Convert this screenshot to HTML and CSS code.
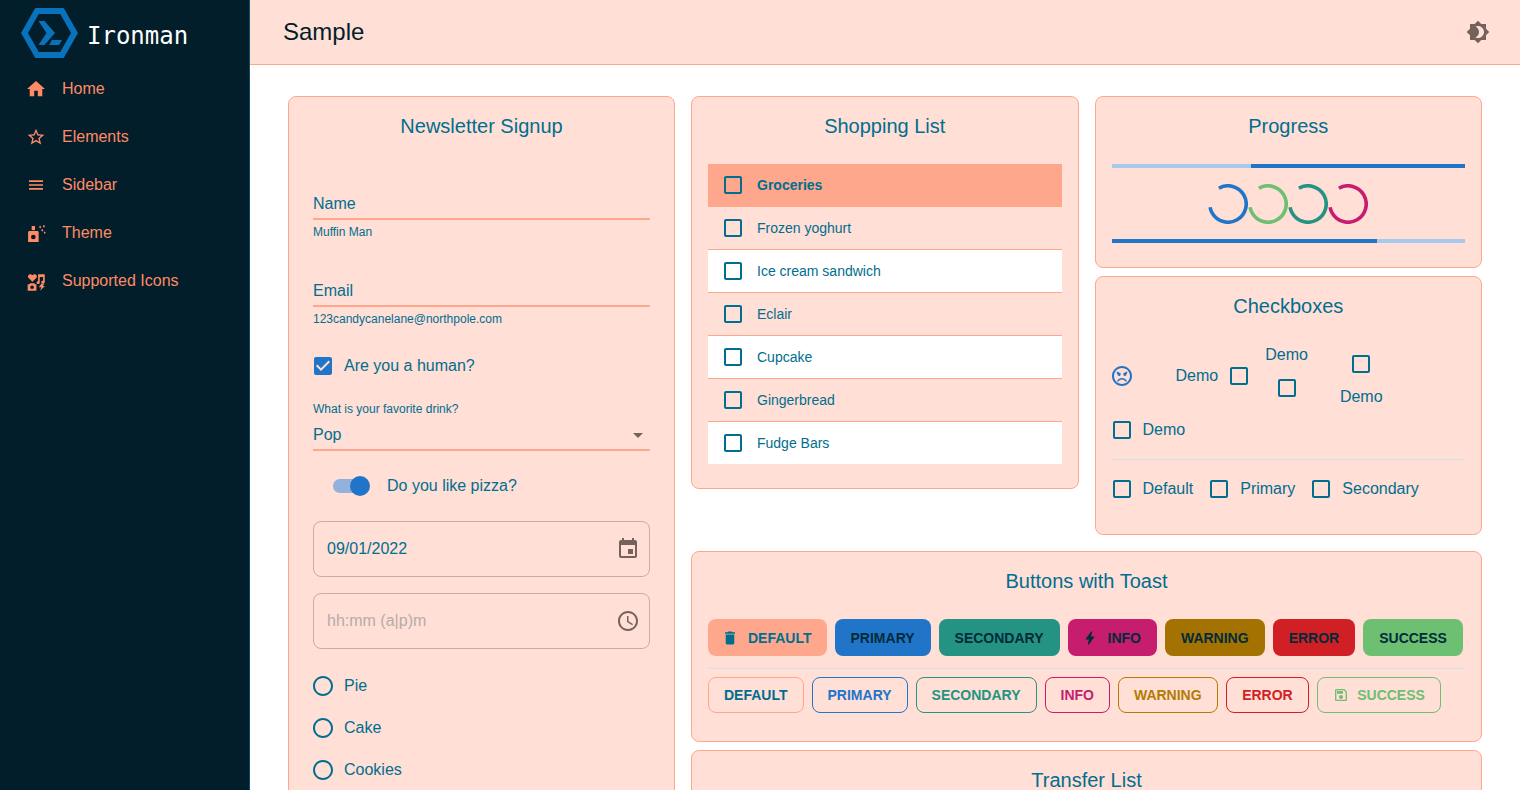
FILE: index.html
```html
<!DOCTYPE html>
<html>
  <head>
    <meta charset="utf-8">
    <link rel="stylesheet" href="styles.css">
    <title>Ironman</title>
  </head>
  <body>
    <svg class="sprite" width="0" height="0">
      <symbol id="box" viewBox="0 0 24 24"><path d="M19 5v14H5V5h14m0-2H5c-1.100 0-2 .9-2 2v14c0 1.100.9 2 2 2h14c1.100 0 2-.9 2-2V5c0-1.100-.9-2-2-2z"/></symbol>
      <symbol id="radio" viewBox="0 0 24 24"><path d="M12 2C6.480 2 2 6.480 2 12s4.480 10 10 10 10-4.480 10-10S17.520 2 12 2zm0 18c-4.420 0-8-3.580-8-8s3.580-8 8-8 8 3.580 8 8-3.580 8-8 8z"/></symbol>
    </svg>

    <aside class="sidebar">
      <div class="brand">
        <svg class="brand-logo" width="60" height="54" viewBox="0 0 60 54">
          <path d="M17 4h25l12.500 22L42 48H17L4.500 26z" fill="none" stroke="#0873bc" stroke-width="6"/>
          <path d="M18.500 14h6L35 26 24.500 38h-6l8-12z" fill="#0873bc"/>
          <path d="M32 33h10l-3 5H29z" fill="#0873bc"/>
        </svg>
        <span class="brand-name">Ironman</span>
      </div>
      <nav>
        <a class="nav-item"><svg viewBox="0.9 0.9 22.2 22.2"><path d="M10 20v-6h4v6h5v-8h3L12 3 2 12h3v8z"/></svg>Home</a>
        <a class="nav-item"><svg viewBox="0 0 24 24"><path d="M22 9.240l-7.190-.62L12 2 9.190 8.630 2 9.240l5.460 4.730L5.820 21 12 17.270 18.180 21l-1.630-7.030L22 9.240zM12 15.400l-3.760 2.270 1-4.280-3.320-2.880 4.380-.38L12 6.100l1.710 4.040 4.380.38-3.320 2.880 1 4.280L12 15.400z"/></svg>Elements</a>
        <a class="nav-item"><svg viewBox="-0.85 -0.85 25.7 25.7"><path d="M3 18h18v-2H3v2zm0-5h18v-2H3v2zm0-7v2h18V6H3z"/></svg>Sidebar</a>
        <a class="nav-item"><svg viewBox="0 0 24 24"><path d="M6.800 3.600h4v5h-4z"/><path fill-rule="evenodd" d="M4.100 9.500h9.600c.8 0 1.500.7 1.500 1.500v11.800H2.500V11c0-.8.8-1.500 1.600-1.500zm4.700 4.500a2.800 2.800 0 1 0 0 5.600 2.800 2.800 0 0 0 0-5.600z"/><path d="M17 3l1.300 1.800L17 6.600l-1.300-1.800zM21.500 2l1.300 1.800-1.300 1.800-1.300-1.800zM19.500 7l1.300 1.800-1.300 1.800-1.300-1.800zM22.500 10l1.200 1.600-1.200 1.600-1.200-1.600z"/></svg>Theme</a>
        <a class="nav-item"><svg viewBox="0 0 24 24"><path fill-rule="evenodd" d="M7.700 13 2.800 8C1 5.500 4.700 2 7.700 5c3-3 6.700.5 4.900 3zM14.500 4h8v9.500c0 2.100-4.200 2.100-4.200 0 0-1.700 1.500-2 2.200-1.800V7.200h-4V14c0 2-3.800 2-3.800 0 0-1.500 1-1.800 1.800-1.700zM5 14.600h5l1 1.400h1.500v7.600H2V16h2zm2.300 2.700a2.200 2.200 0 1 0 0 4.400 2.200 2.200 0 0 0 0-4.400z"/><path d="M18.500 15H22l-1.800 3h2.600l-6 5.800 1.600-4.300h-3z"/></svg>Supported Icons</a>
      </nav>
    </aside>

    <div class="page">
      <header class="topbar">
        <h1>Sample</h1>
        <svg class="theme-icon" viewBox="0 0 24 24"><path d="M20 8.690V4h-4.690L12 .69 8.690 4H4v4.690L.69 12 4 15.310V20h4.690L12 23.310 15.310 20H20v-4.690L23.310 12 20 8.690zM12 18c-.89 0-1.740-.2-2.500-.55C11.560 16.500 13 14.420 13 12s-1.440-4.500-3.500-5.450C10.260 6.200 11.110 6 12 6c3.310 0 6 2.690 6 6s-2.690 6-6 6z"/></svg>
      </header>

      <main class="content">
        <section class="card signup">
          <h2>Newsletter Signup</h2>

          <div class="text-field name-field">
            <div class="field-value">Name</div>
            <div class="helper">Muffin Man</div>
          </div>
          <div class="text-field email-field">
            <div class="field-value">Email</div>
            <div class="helper">123candycanelane@northpole.com</div>
          </div>

          <label class="check-row human">
            <svg class="ctl blue" viewBox="0 0 24 24"><path d="M19 3H5c-1.110 0-2 .9-2 2v14c0 1.100.89 2 2 2h14c1.110 0 2-.9 2-2V5c0-1.100-.89-2-2-2zm-9 14l-5-5 1.410-1.410L10 14.170l7.590-7.590L19 8l-9 9z"/></svg>
            Are you a human?
          </label>

          <div class="select-field">
            <div class="select-label">What is your favorite drink?</div>
            <div class="field-value select-value">Pop<span class="caret"></span></div>
          </div>

          <div class="switch-row">
            <span class="switch"><span class="thumb"></span></span>
            Do you like pizza?
          </div>

          <div class="outlined date">
            09/01/2022
            <svg viewBox="0 0 24 24"><path d="M17 12h-5v5h5v-5zM16 1v2H8V1H6v2H5c-1.110 0-1.990.9-1.990 2L3 19c0 1.100.89 2 2 2h14c1.100 0 2-.9 2-2V5c0-1.100-.9-2-2-2h-1V1h-2zm3 18H5V8h14v11z"/></svg>
          </div>
          <div class="outlined time">
            <span class="placeholder">hh:mm (a|p)m</span>
            <svg viewBox="0 0 24 24"><path d="M11.990 2C6.470 2 2 6.480 2 12s4.470 10 9.990 10C17.520 22 22 17.520 22 12S17.520 2 11.990 2zM12 20c-4.420 0-8-3.580-8-8s3.580-8 8-8 8 3.580 8 8-3.580 8-8 8zm.5-13H11v6l5.250 3.150.75-1.230-4.500-2.670z"/></svg>
          </div>

          <div class="radios">
            <label class="check-row"><svg class="ctl"><use href="#radio"/></svg>Pie</label>
            <label class="check-row"><svg class="ctl"><use href="#radio"/></svg>Cake</label>
            <label class="check-row"><svg class="ctl"><use href="#radio"/></svg>Cookies</label>
          </div>
        </section>

        <div class="right">
          <div class="right-top">
            <section class="card shopping">
              <h2>Shopping List</h2>
              <ul class="list">
                <li class="head"><svg class="ctl"><use href="#box"/></svg>Groceries</li>
                <li><svg class="ctl"><use href="#box"/></svg>Frozen yoghurt</li>
                <li class="white"><svg class="ctl"><use href="#box"/></svg>Ice cream sandwich</li>
                <li><svg class="ctl"><use href="#box"/></svg>Eclair</li>
                <li class="white"><svg class="ctl"><use href="#box"/></svg>Cupcake</li>
                <li><svg class="ctl"><use href="#box"/></svg>Gingerbread</li>
                <li class="white"><svg class="ctl"><use href="#box"/></svg>Fudge Bars</li>
              </ul>
            </section>

            <div class="side">
              <section class="card progress">
                <h2>Progress</h2>
                <div class="bar"><span class="bar-light bar-a"></span><span class="bar-dark"></span></div>
                <div class="spinners">
                  <svg viewBox="0 0 40 40"><circle class="c-blue" cx="20" cy="20" r="18.200"/></svg>
                  <svg viewBox="0 0 40 40"><circle class="c-green" cx="20" cy="20" r="18.200"/></svg>
                  <svg viewBox="0 0 40 40"><circle class="c-teal" cx="20" cy="20" r="18.200"/></svg>
                  <svg viewBox="0 0 40 40"><circle class="c-pink" cx="20" cy="20" r="18.200"/></svg>
                </div>
                <div class="bar"><span class="bar-dark bar-b"></span><span class="bar-light"></span></div>
              </section>

              <section class="card checkboxes">
                <h2>Checkboxes</h2>
                <div class="placements">
                  <svg class="mood" viewBox="0 0 24 24">
                    <path d="M11.990 2C6.470 2 2 6.480 2 12s4.470 10 9.990 10C17.520 22 22 17.520 22 12S17.520 2 11.990 2zM12 20c-4.410 0-8-3.590-8-8s3.590-8 8-8 8 3.590 8 8-3.590 8-8 8zm0-6c-2.330 0-4.320 1.450-5.120 3.500h1.670c.69-1.190 1.970-2 3.450-2s2.750.81 3.450 2h1.670c-.8-2.050-2.790-3.500-5.120-3.500z"/>
                    <path d="M6.500 8.500l1-1 3.500 2.200-.4.900a1.500 1.500 0 0 1-2.900.4 1.500 1.500 0 0 1-.2-1zM17.500 8.500l-1-1-3.500 2.200.4.900a1.500 1.500 0 0 0 2.900.4 1.500 1.500 0 0 0 .2-1z"/>
                  </svg>
                  <div class="place start">Demo<svg class="ctl"><use href="#box"/></svg></div>
                  <div class="place top">Demo<svg class="ctl"><use href="#box"/></svg></div>
                  <div class="place bottom"><svg class="ctl"><use href="#box"/></svg>Demo</div>
                </div>
                <label class="check-row"><svg class="ctl"><use href="#box"/></svg>Demo</label>
                <hr class="divider">
                <div class="check-inline">
                  <label class="check-row"><svg class="ctl"><use href="#box"/></svg>Default</label>
                  <label class="check-row"><svg class="ctl"><use href="#box"/></svg>Primary</label>
                  <label class="check-row"><svg class="ctl"><use href="#box"/></svg>Secondary</label>
                </div>
              </section>
            </div>
          </div>

          <section class="card buttons">
            <h2>Buttons with Toast</h2>
            <div class="btn-row">
              <button class="btn fill-default"><svg viewBox="-2 -2 28 28"><path d="M6 19c0 1.100.9 2 2 2h8c1.100 0 2-.9 2-2V7H6v12zM19 4h-3.500l-1-1h-5l-1 1H5v2h14V4z"/></svg>Default</button>
              <button class="btn fill-primary">Primary</button>
              <button class="btn fill-secondary">Secondary</button>
              <button class="btn fill-info"><svg viewBox="-2 -2 28 28"><path d="M10.500 21H9l1.500-7h-5l8-11H15l-1.500 7h5z"/></svg>Info</button>
              <button class="btn fill-warning">Warning</button>
              <button class="btn fill-error">Error</button>
              <button class="btn fill-success">Success</button>
            </div>
            <hr class="divider btn-divider">
            <div class="btn-row outline-row">
              <button class="btn line-default">Default</button>
              <button class="btn line-primary">Primary</button>
              <button class="btn line-secondary">Secondary</button>
              <button class="btn line-info">Info</button>
              <button class="btn line-warning">Warning</button>
              <button class="btn line-error">Error</button>
              <button class="btn line-success"><svg viewBox="0 0 24 24"><path d="M17 3H5c-1.110 0-2 .9-2 2v14c0 1.100.89 2 2 2h14c1.100 0 2-.9 2-2V7l-4-4zm2 16H5V5h11.170L19 7.830V19zm-7-7c-1.660 0-3 1.340-3 3s1.340 3 3 3 3-1.340 3-3-1.340-3-3-3zM6 6h9v4H6z"/></svg>Success</button>
            </div>
          </section>

          <section class="card transfer">
            <h2>Transfer List</h2>
          </section>
        </div>
      </main>
    </div>
  </body>
</html>
```

FILE: styles.css
```css
html, body {
  margin: 0;
  height: 100%;
  overflow: hidden;
}

body {
  display: flex;
  font-family: "Liberation Sans", Arial, sans-serif;
  font-size: 16px;
  color: #006e8f;
  background: #fff;
}

.sprite {
  display: none;
}

svg {
  fill: currentColor;
  flex: none;
}

/* sidebar */
.sidebar {
  width: 250px;
  flex: none;
  box-sizing: border-box;
  background: #011e2a;
  border-right: 1px solid #0d4c66;
  color: #ff8a65;
}

.brand {
  height: 65px;
  display: flex;
  align-items: center;
  padding-left: 20px;
  box-sizing: border-box;
}

.brand-logo {
  margin-top: 3px;
}

.brand-name {
  margin-left: 7px;
  margin-top: 7px;
  font-family: "DejaVu Sans Mono", monospace;
  font-size: 24px;
  color: #fff;
}

.nav-item {
  height: 48px;
  display: flex;
  align-items: center;
  padding-left: 26px;
}

.nav-item svg {
  width: 20px;
  height: 20px;
  margin-right: 16px;
}

/* top bar */
.page {
  flex: 1;
  min-width: 0;
}

.topbar {
  height: 64px;
  display: flex;
  align-items: center;
  justify-content: space-between;
  padding: 0 30px 0 33px;
  background: #ffdfd6;
  border-bottom: 1px solid #ffa78c;
}

.topbar h1 {
  margin: 0;
  font-size: 24px;
  font-weight: 400;
  color: #011e2a;
}

.theme-icon {
  width: 24px;
  height: 24px;
  color: #75625d;
}

/* cards */
.content {
  display: flex;
  gap: 16px;
  padding: 31px 38px 0;
}

.card {
  box-sizing: border-box;
  background: #ffdfd6;
  border: 1px solid #ffa78c;
  border-radius: 8px;
  padding: 16px;
}

.card h2 {
  margin: 0;
  height: 51px;
  font-size: 20px;
  font-weight: 400;
  line-height: 26px;
  text-align: center;
}

.signup {
  width: 387px;
  flex: none;
  height: 900px;
  padding: 16px 24px;
}

.right {
  flex: 1;
  min-width: 0;
}

.right-top {
  display: flex;
  gap: 16px;
  align-items: flex-start;
}

.shopping, .side {
  flex: 0 0 calc(50% - 8px);
  min-width: 0;
}

.side {
  display: flex;
  flex-direction: column;
  gap: 8px;
}

/* form bits */
.field-value {
  line-height: 24px;
  padding-bottom: 2px;
  border-bottom: 2px solid #ffa78c;
}

.helper {
  margin-top: 4px;
  font-size: 12px;
  line-height: 16px;
}

.name-field {
  margin-top: 28px;
}

.email-field {
  margin-top: 39px;
}

.check-row {
  display: flex;
  align-items: center;
  height: 42px;
}

.ctl {
  width: 24px;
  height: 24px;
  margin-left: -2px;
  margin-right: 9px;
}

.ctl.blue {
  color: #2175c9;
}

.human {
  margin-top: 18px;
}

.select-field {
  margin-top: 14px;
}

.select-label {
  font-size: 12px;
  line-height: 16px;
  margin-bottom: 6px;
}

.select-value {
  position: relative;
}

.caret {
  position: absolute;
  right: 7px;
  top: 10px;
  border: 5px solid transparent;
  border-top-color: #75625d;
  border-bottom: 0;
}

.switch-row {
  display: flex;
  align-items: center;
  height: 42px;
  margin-top: 14px;
  padding-left: 20px;
}

.switch {
  position: relative;
  width: 34px;
  height: 14px;
  margin-right: 20px;
  border-radius: 7px;
  background: #92b1dc;
}

.thumb {
  position: absolute;
  left: 17px;
  top: -3px;
  width: 20px;
  height: 20px;
  border-radius: 50%;
  background: #2175c9;
}

.outlined {
  height: 56px;
  box-sizing: border-box;
  display: flex;
  align-items: center;
  justify-content: space-between;
  padding: 0 9px 0 13px;
  border: 1px solid #c9aca4;
  border-radius: 8px;
}

.outlined svg {
  width: 24px;
  height: 24px;
  color: #75625d;
}

.date {
  margin-top: 14px;
}

.time {
  margin-top: 16px;
}

.placeholder {
  color: #b5aca8;
}

.radios {
  margin-top: 16px;
}

/* shopping list */
.shopping {
  padding-bottom: 24px;
}

.list {
  list-style: none;
  margin: 0;
  padding: 0;
  font-size: 14px;
}

.list li {
  display: flex;
  align-items: center;
  height: 43px;
  box-sizing: border-box;
  padding-left: 16px;
  border-bottom: 1px solid #ffa78c;
}

.list .ctl {
  margin-left: -3px;
  margin-right: 12px;
}

.list .head {
  background: #ffa78c;
  font-weight: 700;
  border-bottom: 0;
  padding-bottom: 1px;
}

.list .white {
  background: #fff;
}

.list li:last-child {
  height: 42px;
  border-bottom: 0;
}

/* progress */
.progress {
  padding-bottom: 24px;
}

.bar {
  display: flex;
  height: 4px;
}

.bar-dark {
  flex: 1;
  background: #2175c9;
}

.bar-light {
  flex: 1;
  background: #a6c9ec;
}

.bar-a {
  flex: none;
  width: 139px;
}

.bar-b {
  flex: none;
  width: 265px;
}

.spinners {
  display: flex;
  justify-content: center;
  padding: 16px 0 15px;
}

.spinners svg {
  width: 40px;
  height: 40px;
}

.spinners circle {
  fill: none;
  stroke-width: 3.6;
  stroke-dasharray: 91.5 114.400;
  transform: rotate(-120deg);
  transform-origin: 20px 20px;
}

.c-blue { stroke: #2175c9; }
.c-green { stroke: #6dbf72; }
.c-teal { stroke: #249383; }
.c-pink { stroke: #c61d6f; }

/* checkboxes */
.placements {
  display: flex;
  align-items: center;
  height: 66px;
  margin-top: -1px;
}

.mood {
  width: 24px;
  height: 24px;
  margin-left: -2px;
  color: #2175c9;
}

.place {
  display: flex;
  align-items: center;
  line-height: 24px;
}

.place.start {
  margin-left: 42px;
}

.place.start .ctl {
  margin-left: 9px;
  margin-right: 0;
}

.place.top, .place.bottom {
  flex-direction: column;
}

.place.top {
  margin-left: 14px;
}

.place.bottom {
  margin-left: 32px;
}

.place.top .ctl, .place.bottom .ctl {
  margin: 9px 0;
}

.divider {
  margin: 8px 0;
  height: 1px;
  border: 0;
  background: #d3e2e6;
}

.check-inline {
  display: flex;
  padding-bottom: 8px;
}

.check-inline .check-row {
  margin-right: 16px;
}

/* buttons */
.buttons {
  margin-top: 16px;
}

.btn-row {
  display: flex;
  gap: 8px;
}

.btn {
  display: flex;
  align-items: center;
  height: 37px;
  padding: 0 16px;
  box-sizing: border-box;
  border: 0;
  border-radius: 8px;
  font-family: inherit;
  font-size: 14px;
  font-weight: 700;
  text-transform: uppercase;
  color: #012b3a;
}

.btn svg {
  width: 20px;
  height: 20px;
  margin-left: -4px;
  margin-right: 8px;
}

.fill-default { background: #ffa78c; color: #006e8f; padding-right: 15px; }
.fill-primary { background: #2175c9; }
.fill-secondary { background: #249383; }
.fill-info { background: #c61d6f; }
.fill-warning { background: #a37200; }
.fill-error { background: #d01f25; }
.fill-success { background: #6dbf72; }

.btn-divider {
  margin: 12px 0 0;
}

.outline-row {
  margin-top: 8px;
  padding-bottom: 12px;
}

.outline-row .btn {
  height: 36px;
  background: transparent;
  border: 1px solid;
  padding: 0 15px;
}

.outline-row .btn svg {
  width: 16px;
  height: 16px;
  margin-left: 0;
  margin-right: 8px;
}

.outline-row .line-default { color: #006e8f; border-color: #ffa78c; }
.line-primary { color: #2175c9; }
.line-secondary { color: #249383; }
.line-info { color: #c61d6f; }
.line-warning { color: #b37c00; }
.outline-row .line-error { color: #d01f25; padding: 0 15.5px; }
.line-success { color: #6dbf72; }

.transfer {
  margin-top: 8px;
  height: 300px;
}
```
